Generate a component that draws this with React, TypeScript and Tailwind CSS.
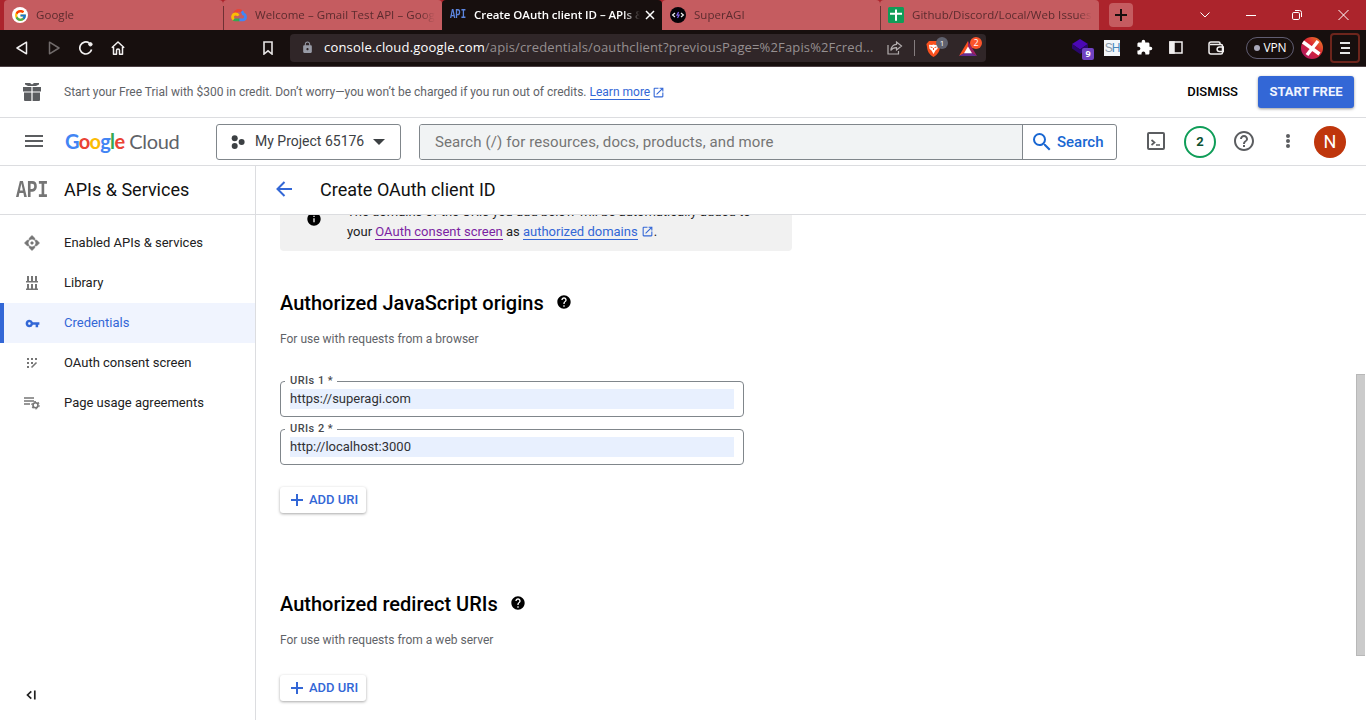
import type { ReactNode } from "react";
import { MdVpnKey, MdLock, MdExtension, MdSearch, MdHelpOutline, MdHelp, MdInfo, MdOpenInNew, MdMenu } from "react-icons/md";
import { FcGoogle } from "react-icons/fc";

const ui = "font-['Open_Sans','Noto_Sans',sans-serif]";

function CloudLogo() {
  return (
    <svg width="16" height="14" viewBox="0 0 16 14" className="shrink-0" fill="none" strokeWidth="2.8">
      <path d="M3.2 6.2C4 2.6 8.2 1 11 3.6" stroke="#ea4335" />
      <path d="M10.6 3.4c1 .8 1.5 1.6 1.7 2.6 3 .9 3 5.6-.5 5.8H8" stroke="#4285f4" />
      <path d="M8.4 11.8H4.2c-.8 0-1.4-.2-1.9-.6" stroke="#34a853" />
      <path d="M2.8 11.4C.6 9.6 1.6 6 4.6 6c1.4 0 2.2.6 2.8 1.600" stroke="#fbbc04" />
    </svg>
  );
}

function ApiMark({ small = false }: { small?: boolean }) {
  return small ? (
    <span className="inline-block w-4 shrink-0 origin-left scale-x-[.74] font-['Liberation_Mono',monospace] text-[12px] leading-none font-bold text-[#5c85de]">API</span>
  ) : (
    <span className="inline-block h-6 w-8 origin-left scale-x-[.75] font-['Liberation_Mono',monospace] text-[24px] leading-6 font-bold text-[#757575]">API</span>
  );
}

function Tab({ icon, title, active = false, divider = false, w }: { icon: ReactNode; title: string; active?: boolean; divider?: boolean; w: string }) {
  return (
    <div className={`${w} flex h-[30px] shrink-0 items-center overflow-hidden rounded-t-[4px] ${active ? "bg-[#170f0e] text-white" : "bg-[#c55c60] text-[#5c2b2e]"}`}>
      {divider ? <div className="mt-[6px] h-6 w-px shrink-0 bg-[#6e3134]" /> : <div className="w-px shrink-0" />}
      <div className="flex w-[23px] shrink-0 justify-end">{icon}</div>
      <div className={`ml-2 w-[180px] shrink-0 overflow-hidden text-[11.5px] whitespace-nowrap ${active ? "max-w-[166px] [mask-image:linear-gradient(to_right,black_90%,transparent)] font-semibold tracking-[-.05px]" : "[mask-image:linear-gradient(to_right,black_92%,transparent)] tracking-[.05px]"}`}>{title}</div>
      {active && (
        <svg width="10" height="10" viewBox="0 0 10 10" className="ml-[5px] shrink-0" stroke="#fff" strokeWidth="1.5"><path d="M1 1l8 8M9 1L1 9" /></svg>
      )}
    </div>
  );
}

function TabStrip() {
  return (
    <div className="flex h-[30px] bg-[#ac242c] pl-1">
      <Tab w="w-[219px]" title="Google" icon={<span className="flex size-4 items-center justify-center rounded-full bg-white"><FcGoogle size={13} /></span>} />
      <Tab w="w-[219px]" divider title="Welcome – Gmail Test API – Google Cloud" icon={<CloudLogo />} />
      <Tab w="w-[220px]" active title="Create OAuth client ID – APIs & Services" icon={<ApiMark small />} />
      <Tab w="w-[218px]" title="SuperAGI" icon={
        <svg width="16" height="16" viewBox="0 0 16 16"><circle cx="8" cy="8" r="8" fill="#050308" /><path d="M5 6L2.6 8 5 10M11 6l2.4 2L11 10" stroke="#eee" fill="none" strokeWidth="1.2" /><path d="M8.6 5L7 8.2h2L7.5 11" stroke="#7d63e8" fill="none" strokeWidth="1.3" /></svg>
      } />
      <Tab w="w-[219px]" divider title="Github/Discord/Local/Web Issues in SuperAGI" icon={
        <svg width="16" height="16" viewBox="0 0 16 16"><rect width="16" height="16" rx="1.5" fill="#109d58" /><path d="M7 2.500h2v3.200h5v2H9v6H7v-6H2v-2h5z" fill="#fff" /></svg>
      } />
      <div className="mt-[3px] ml-[10px] flex size-6 items-center justify-center rounded-[4px] bg-[#c55c60]">
        <svg width="12" height="12" viewBox="0 0 12 12" stroke="#170f0e" strokeWidth="2"><path d="M6 0v12M0 6h12" /></svg>
      </div>
      <div className="ml-auto flex items-center gap-[36px] pr-[17px]">
        <svg width="10" height="6" viewBox="0 0 10 6" fill="none" stroke="#fff"><path d="M.5.5L5 5 9.500.5" /></svg>
        <svg width="10" height="10" viewBox="0 0 10 10" stroke="#fff"><path d="M0 5.500h10" /></svg>
        <svg width="10" height="10" viewBox="0 0 10 10" fill="none" stroke="#fff"><rect x=".5" y="2.500" width="7" height="7" rx="1.300" /><path d="M3 .5h4.500a2 2 0 0 1 2 2V7" /></svg>
        <svg width="11" height="10" viewBox="0 0 11 10" stroke="#fff"><path d="M.5 0l10 10M10.500 0L.5 10" /></svg>
      </div>
    </div>
  );
}

function Toolbar() {
  return (
    <div className="flex h-[37px] items-center border-b border-[#4c4044] bg-[#170f0e] pb-px text-white">
      <svg width="12" height="14" viewBox="0 0 12 14" className="ml-4" fill="none" stroke="#f2f0f0" strokeWidth="1.500" strokeLinejoin="round"><path d="M10.500 1.200v11.600L1 7z" /></svg>
      <svg width="12" height="14" viewBox="0 0 12 14" className="ml-5" fill="none" stroke="#716b6b" strokeWidth="1.500" strokeLinejoin="round"><path d="M1.500 1.200v11.600L11 7z" /></svg>
      <svg width="14" height="14" viewBox="0 0 14 14" className="ml-[19px]" fill="none" stroke="#f2f0f0" strokeWidth="1.700"><path d="M12.600 8.600A6 6 0 1 1 10.200 2" /><circle cx="11.400" cy="3.300" r="1.700" fill="#f2f0f0" strokeWidth="1" /></svg>
      <svg width="14" height="14" viewBox="0 0 14 14" className="ml-[18px]" fill="none" stroke="#f2f0f0" strokeWidth="1.500" strokeLinejoin="round"><path d="M.8 6.800L7 1l6.200 5.800M2.500 6v7.200h3V9.500a1.500 1.500 0 0 1 3 0v3.700h3V6" /></svg>
      <svg width="10" height="14" viewBox="0 0 10 14" className="ml-[138px]" fill="none" stroke="#e8e5e5" strokeWidth="1.600"><path d="M1 1h8v12L5 9.800 1 13z" /></svg>
      <div className="ml-[17px] flex h-7 w-[696px] items-center rounded-[4px] bg-[#302628]">
        <MdLock size={13} className="ml-[11px] shrink-0 text-[#989ba6]" />
        <div className="ml-[10px] w-[551px] shrink-0 text-[13px] whitespace-nowrap text-[#969091]"><span className="tracking-[.18px] text-white">console.cloud.google.com</span><span className="tracking-[.14px]">/apis/credentials/oauthclient?previousPage=%2Fapis%2Fcred...</span></div>
        <svg width="16" height="14" viewBox="0 0 16 14" className="ml-3 shrink-0" fill="none" stroke="#b3aeaf" strokeWidth="1.200"><path d="M1 4v9h10.500v-3" /><path d="M9.500 1l5 4-5 4V6.600C7 6.500 5 7.500 3.800 9.500 4.200 6 6 3.600 9.500 3.300z" /></svg>
        <div className="ml-[11px] h-4 w-px bg-[#857d7f]" />
        <div className="relative ml-[11px] h-5 w-6">
          <svg width="15" height="18" viewBox="0 0 15 18" className="mt-[2px]"><path d="M3 1h9l2.600 3-.6 3c-.6 5-2 7-6.500 10C3 14 1.600 12 1 7L.4 4z" fill="#f9511f" /><path d="M3 4.800l3 .3 1.500-.6 1.500.6 3-.3-.5 4-2 1.800-2 3.400-2-3.400-2-1.800z" fill="#fff" /><path d="M4.500 7l2 .6M10.500 7l-2 .6M7.500 8v2" stroke="#f9511f" /></svg>
          <span className="absolute -top-px left-[10px] flex size-3 items-center justify-center rounded-full bg-[#60626f] text-[8px] leading-none text-white">1</span>
        </div>
        <div className="relative ml-[9px] h-5 w-6">
          <svg width="18" height="15" viewBox="0 0 18 15" className="mt-[3px]"><path d="M9 0L0 15l9-4.500z" fill="#f9511f" /><path d="M9 0l9 15-9-4.500z" fill="#9e1f63" /><path d="M0 15h18l-9-5z" fill="#662d91" /><path d="M9 5.500l-4 6.700h8z" fill="#fff" /></svg>
          <span className="absolute -top-px left-[11px] flex size-3 items-center justify-center rounded-full bg-[#fb542b] text-[9px] leading-none text-white">2</span>
        </div>
      </div>
      <div className="relative ml-[86px] h-6 w-[22px]">
        <svg width="18" height="16" viewBox="0 0 18 16" className="mt-[3px]"><path d="M8 0l8 5-8 5.500L0 5z" fill="#4b08b4" /><path d="M0 5v4.500L8 15l8-5.500V5l-8 5.500z" fill="#29076d" /></svg>
        <span className="absolute top-3 left-[10px] flex size-3 items-center justify-center rounded-[2px] bg-[#7042c2] text-[9px] leading-none font-bold">9</span>
      </div>
      <div className="ml-[10px] flex size-4 items-center justify-center bg-[#f3f6f9] font-['Liberation_Sans',sans-serif] text-[12px] leading-none tracking-[-1px] text-[#4988bd]"><span className="text-[#8b9bab]">S</span>H</div>
      <MdExtension size={17} className="ml-[16px]" />
      <svg width="14" height="13" viewBox="0 0 14 13" className="ml-[16px]" fill="none" stroke="#f2f0f0" strokeWidth="1.500"><path d="M1 1h12v11H1z" /><path d="M1 1h4v11H1z" fill="#f2f0f0" /></svg>
      <svg width="16" height="14" viewBox="0 0 16 14" className="ml-[25px]" fill="none" stroke="#f2f0f0" strokeWidth="1.500"><path d="M12 3.500V2.300C12 1.500 11.500 1 10.700 1H3a2 2 0 0 0-2 2v8a2 2 0 0 0 2 2h10c1 0 1.500-.6 1.500-1.500V5c0-.9-.6-1.500-1.500-1.500H2" /><path d="M15.300 6h-4a2.200 2.200 0 0 0 0 4.400h4z" /></svg>
      <div className="ml-[22px] flex h-[22px] w-12 items-center justify-center gap-1 rounded-full border border-[#605d72] text-[12px] tracking-[-.2px]"><span className="size-[6px] rounded-full bg-[#aaa9ba]" />VPN</div>
      <svg width="22" height="22" viewBox="0 0 22 22" className="ml-[7px]"><defs><linearGradient id="av" x1="0" y1="1" x2="1" y2="0"><stop stopColor="#a4166a" /><stop offset=".55" stopColor="#d92533" /><stop offset="1" stopColor="#f48b24" /></linearGradient></defs><circle cx="11" cy="11" r="11" fill="url(#av)" /><path d="M2 5l16.500 12M17 4L6 18" stroke="#fff" strokeWidth="3.500" /></svg>
      <div className="ml-[7px] flex h-[30px] w-[30px] flex-col items-center justify-center gap-[3px] rounded-[4px] border-2 border-[#6d251c]">
        <div className="h-[2px] w-[10px] bg-white/90" /><div className="h-[2px] w-[9px] bg-white/90" /><div className="h-[2px] w-[10px] bg-white/90" />
      </div>
    </div>
  );
}

function Banner() {
  return (
    <div className="flex h-[51px] items-center border-b border-[#dcdde0]">
      <svg width="18" height="18" viewBox="0 0 18 18" className="ml-[23px]" fill="#5b5d60"><path d="M2 0h5l2 1.500L11 0h5v1.500l-3 1.500H5L2 1.500zM0 4h8.400v4.500H0zm9.600 0H18v4.500H9.600zM1 9.500h7.400V18H2a1 1 0 0 1-1-1zm8.600 0H17V17a1 1 0 0 1-1 1H9.600z" /></svg>
      <div className="ml-[23px] text-[12px] whitespace-nowrap text-[#5f6368]">Start your Free Trial with $300 in credit. Don’t worry—you won’t be charged if you run out of credits. <span className="border-b border-[#3367d6] text-[#3367d6]">Learn more</span></div>
      <MdOpenInNew size={13} className="ml-[2px] text-[#3367d6]" />
      <div className="ml-auto text-[13px] font-medium text-black">DISMISS</div>
      <div className="mr-3 ml-5 flex h-8 w-24 items-center justify-center rounded-[3px] bg-[#3367d6] text-[13px] font-bold text-[#f0f4fe] shadow-[0_1px_3px_rgba(0,0,0,.4)]">START FREE</div>
    </div>
  );
}

function Header() {
  return (
    <div className="flex h-12 items-center border-b border-[#dcdde0]">
      <MdMenu size={24} className="mb-px ml-[22px] text-[#5b5d60]" />
      <div className="mb-[2px] ml-[18px] w-[118px] pl-px font-['Lato',sans-serif] text-[20px] leading-6 tracking-[-.3px] whitespace-nowrap text-[#5f6368]">
        <span className="font-bold tracking-[-.7px]"><span className="text-[#4285f4]">G</span><span className="text-[#ea4335]">o</span><span className="text-[#fbbc04]">o</span><span className="text-[#4285f4]">g</span><span className="text-[#34a853]">l</span><span className="text-[#ea4335]">e</span></span> Cloud
      </div>
      <div className="ml-[34px] flex h-9 w-[185px] items-center rounded-[3px] border border-[#80868b] text-[14px] text-[#3c4043]">
        <svg width="14" height="14" viewBox="0 0 14 14" className="ml-[14px]" fill="#3c4043"><circle cx="3.700" cy="3.200" r="3" /><circle cx="10.600" cy="7" r="3" /><circle cx="3.700" cy="10.900" r="3" /></svg>
        <span className="ml-[10px] whitespace-nowrap">My Project 65176</span>
        <svg width="12" height="6" viewBox="0 0 12 6" className="ml-[9px]" fill="#3c4043"><path d="M0 0h12L6 6z" /></svg>
      </div>
      <div className="ml-[18px] flex h-9 w-[698px] items-center overflow-hidden rounded-[3px] border border-[#80868b]">
        <div className="flex h-full w-[602px] items-center bg-[#f1f3f4] pt-px pl-[15px] text-[15px] tracking-[.1px] text-[#757575]">Search (/) for resources, docs, products, and more</div>
        <div className="flex h-full flex-1 items-center border-l border-[#80868b] text-[15px] font-medium text-[#1967d2]"><MdSearch size={24} className="ml-[7px]" /><span className="mt-px ml-[3px]">Search</span></div>
      </div>
      <svg width="18" height="18" viewBox="0 0 18 18" className="mb-px ml-[30px]" fill="none" stroke="#5b5d60" strokeWidth="2"><rect x="1" y="1" width="16" height="16" rx="1" /><path d="M4.500 8L7.500 10.500l-3 2.500M9 13h4" strokeWidth="1.700" /></svg>
      <div className="ml-[19px] flex size-8 items-center justify-center rounded-full border-2 border-[#0f9d58] text-[13px] font-bold text-[#0d5132]">2</div>
      <MdHelpOutline size={24} className="mb-px ml-4 text-[#5b5d60]" />
      <svg width="4" height="14" viewBox="0 0 4 14" className="mb-px ml-[30px]" fill="#5b5d60"><circle cx="2" cy="2" r="2" /><circle cx="2" cy="7" r="2" /><circle cx="2" cy="12" r="2" /></svg>
      <div className="ml-6 flex size-8 items-center justify-center rounded-full bg-[#bf360c] text-[18px] text-white">N</div>
    </div>
  );
}

function NavItem({ icon, label, active = false }: { icon: ReactNode; label: string; active?: boolean }) {
  return (
    <div className={`flex h-10 items-center border-l-4 text-[13px] ${active ? "border-[#3367d6] bg-[#f0f4fe] text-[#3367d6]" : "border-transparent text-[#212121]"}`}>
      <div className="ml-5 flex w-4 justify-center">{icon}</div>
      <span className="ml-6">{label}</span>
    </div>
  );
}

function Sidebar() {
  return (
    <div className="flex w-64 shrink-0 flex-col border-r border-[#dcdde0]">
      <div className="flex h-[49px] items-center border-b border-[#dcdde0]">
        <div className="mt-[2px] ml-4 h-6"><ApiMark /></div>
        <div className="mb-[2px] ml-4 text-[18px] text-[#111]">APIs &amp; Services</div>
      </div>
      <div className="pt-2">
        <NavItem label="Enabled APIs & services" icon={
          <svg width="16" height="16" viewBox="0 0 16 16" fill="#757575" stroke="#757575" strokeWidth=".6" strokeLinejoin="round"><path d="M8 .5l2.800 2.700v1.900L8 4 5.200 5.100V3.200zM8 15.500l2.800-2.700v-1.900L8 12l-2.800-1.100v1.900zM.5 8l2.700-2.800h1.900L4 8l1.100 2.800H3.200zM15.500 8l-2.700-2.800h-1.900L12 8l-1.100 2.800h1.900z" /><circle cx="8" cy="8" r="1.300" /></svg>
        } />
        <NavItem label="Library" icon={
          <svg width="12" height="14" viewBox="0 0 12 14" fill="#757575"><path d="M0 5h12v1.500H0zM0 12.500h12V14H0zM1 0h2v5H1zM5 0h2v5H5zM9 0h2v5H9zM1 8h2v5H1zM5 8h2v5H5zM9 8h2v5H9z" /></svg>
        } />
        <NavItem label="Credentials" active icon={<MdVpnKey size={15} />} />
        <NavItem label="OAuth consent screen" icon={
          <svg width="12" height="12" viewBox="0 0 12 12" fill="#757575"><path d="M1 1h2v2H1zM5 1h2v2H5zM9 1h2v2H9zM1 5h2v2H1zM5 5h2v2H5zM1 9h2v2H1z" /><path d="M5.500 10.500l5-5" stroke="#757575" strokeWidth="1.600" /></svg>
        } />
        <NavItem label="Page usage agreements" icon={
          <svg width="16" height="14" viewBox="0 0 16 14" className="shrink-0" fill="none" stroke="#757575"><path d="M0 2h10M0 5h10M0 8h6" strokeWidth="1.500" /><circle cx="11.500" cy="9.200" r="2.500" strokeWidth="1.600" /><circle cx="11.500" cy="9.200" r="3.700" strokeWidth="1.100" strokeDasharray="1.900 1.974" /></svg>
        } />
      </div>
      <svg width="11" height="10" viewBox="0 0 11 10" className="mt-auto mb-[20px] ml-[26px]" fill="none" stroke="#212121" strokeWidth="1.700"><path d="M5.300 1.300L1.500 5l3.800 3.700M8.800.5v9" /></svg>
    </div>
  );
}

function UriField({ label, value }: { label: string; value: string }) {
  return (
    <fieldset className="h-[42px] w-full rounded-[4px] border border-[#80868b] px-[9px]">
      <legend className="-ml-[5px] h-3 pr-[4px] pl-[5px] text-[11px] leading-3 font-medium tracking-[.45px] text-[#47494d]">{label}</legend>
      <div className="mt-[2px] h-5 bg-[#e8f0fe] text-[13px] leading-5 text-[#303134]">{value}</div>
    </fieldset>
  );
}

function AddUri() {
  return (
    <div className="flex h-[26px] w-[86px] items-center rounded-[3px] text-[13px] font-medium whitespace-nowrap text-[#3367d6] shadow-[0_1px_3px_rgba(0,0,0,.35)]">
      <svg width="12" height="12" viewBox="0 0 12 12" className="mb-px ml-[11px] shrink-0" stroke="#3367d6" strokeWidth="2"><path d="M6 0v12M0 6h12" /></svg>
      <span className="ml-[6px]">ADD URI</span>
    </div>
  );
}

function Content() {
  return (
    <div className="flex min-w-0 flex-1 flex-col">
      <div className="flex h-[49px] shrink-0 items-center border-b border-[#dcdde0]">
        <svg width="16" height="16" viewBox="0 0 16 16" className="mb-[2px] ml-5" fill="none" stroke="#3367d6" strokeWidth="2"><path d="M16 8H1.500M8.500 1l-7 7 7 7" /></svg>
        <div className="mb-[2px] ml-7 text-[18px] text-[#111]">Create OAuth client ID</div>
      </div>
      <div className="flex min-h-0 flex-1 overflow-hidden pl-6">
        <div className="w-[512px]">
          <div className="-mt-4 flex h-[52px] rounded-[4px] bg-[#f1f1f1]">
            <MdInfo size={16} className="mt-[12px] ml-[26px] shrink-0 text-black" />
            <div className="mt-[3px] ml-[25px] text-[13px] leading-5 whitespace-nowrap text-[#212121]">
              <div>The domains of the URIs you add below will be automatically added to</div>
              <div>your <span className="border-b border-[#7b1fa2] text-[#7b1fa2]">OAuth consent screen</span> as <span className="border-b border-[#3367d6] text-[#3367d6]">authorized domains</span><MdOpenInNew size={13} className="-mt-[3px] ml-[3px] inline text-[#3367d6]" />.</div>
            </div>
          </div>
          <div className="mt-[38px] flex h-7 items-center text-[20px] font-medium text-black">Authorized JavaScript origins<MdHelp size={16} className="mb-[2px] ml-3" /></div>
          <div className="mt-[14px] text-[12px] leading-4 text-[#5f6368]">For use with requests from a browser</div>
          <div className="mt-7 flex w-[464px] flex-col gap-[6px]">
            <UriField label="URIs 1 *" value="https://superagi.com" />
            <UriField label="URIs 2 *" value="http://localhost:3000" />
          </div>
          <div className="mt-[22px]"><AddUri /></div>
          <div className="mt-[77px] flex h-7 items-center text-[20px] font-medium text-black">Authorized redirect URIs<MdHelp size={16} className="mb-[2px] ml-3" /></div>
          <div className="mt-[14px] text-[12px] leading-4 text-[#5f6368]">For use with requests from a web server</div>
          <div className="mt-[27px]"><AddUri /></div>
        </div>
        <div className="mt-[159px] mr-px ml-auto h-[282px] w-[9px] border border-r-0 border-[#b8b8b8] bg-[#cbcbcb]" />
      </div>
    </div>
  );
}

export default function App() {
  return (
    <div className="flex h-[720px] w-[1366px] flex-col overflow-hidden bg-white font-['Roboto',sans-serif]">
      <div className={`${ui} shrink-0`}>
        <TabStrip />
        <Toolbar />
      </div>
      <div className="shrink-0">
        <Banner />
        <Header />
      </div>
      <div className="flex min-h-0 flex-1">
        <Sidebar />
        <Content />
      </div>
    </div>
  );
}
